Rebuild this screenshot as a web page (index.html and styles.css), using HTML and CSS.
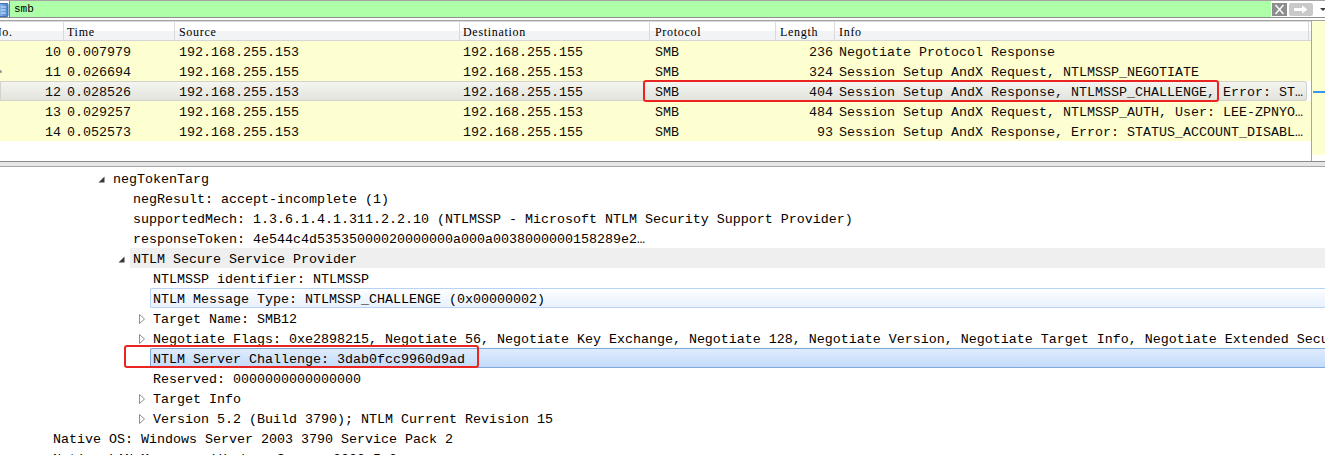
FILE: index.html
```html
<!DOCTYPE html>
<html>
<head>
<meta charset="utf-8">
<title>Wireshark - smb</title>
<link rel="stylesheet" href="styles.css">
</head>
<body>
<div class="app">
  <div class="filterbar">
    <div class="fb-icon">
      <svg width="9" height="16" viewBox="0 0 9 16">
        <defs><linearGradient id="bk" x1="0" y1="0" x2="1" y2="0"><stop offset="0" stop-color="#9cc4ef"/><stop offset="1" stop-color="#4a82cc"/></linearGradient></defs>
        <rect x="-3" y="2.5" width="11" height="13" rx="1" fill="url(#bk)" stroke="#3c6fb4"/>
        <path d="M1 6H6M1 9H6M1 12H6" stroke="#d8e8fa" stroke-width="1"/>
      </svg>
    </div>
    <div class="fb-input">smb</div>
    <div class="fb-clear">
      <svg width="15" height="13" viewBox="0 0 15 13"><rect width="15" height="13" fill="#8d8d8d"/><path d="M3.5 2L11.5 11M11.5 2L3.5 11" stroke="#fff" stroke-width="1.4"/></svg>
    </div>
    <div class="fb-apply">
      <svg width="24" height="13" viewBox="0 0 24 13"><rect width="24" height="13" rx="2" fill="#c9c9c9"/><path d="M5 5H13V2.5L18.5 6.5L13 10.5V8H5Z" fill="#fff"/></svg>
    </div>
    <div class="fb-drop">
      <svg width="5" height="16" viewBox="0 0 5 16"><path d="M0 7H6L3 10Z" fill="#3a3a3a"/></svg>
    </div>
  </div>
  <div class="gap"></div>
  <div class="plist">
    <div class="plist-main">
      <div class="phead">
        <div class="h h-no"><span class="noh">No.</span></div>
        <div class="h h-time">Time</div>
        <div class="h h-src">Source</div>
        <div class="h h-dst">Destination</div>
        <div class="h h-proto">Protocol</div>
        <div class="h h-len">Length</div>
        <div class="h h-info">Info</div>
      </div>
      <div class="prow">
        <div class="c c-no">10</div><div class="c c-time">0.007979</div><div class="c c-src">192.168.255.153</div><div class="c c-dst">192.168.255.155</div><div class="c c-proto">SMB</div><div class="c c-len">236</div><div class="c c-info">Negotiate Protocol Response</div>
      </div>
      <div class="prow">
        <div class="c c-no"><span class="dot"></span>11</div><div class="c c-time">0.026694</div><div class="c c-src">192.168.255.155</div><div class="c c-dst">192.168.255.153</div><div class="c c-proto">SMB</div><div class="c c-len">324</div><div class="c c-info">Session Setup AndX Request, NTLMSSP_NEGOTIATE</div>
      </div>
      <div class="prow sel">
        <div class="c c-no">12</div><div class="c c-time">0.028526</div><div class="c c-src">192.168.255.153</div><div class="c c-dst">192.168.255.155</div><div class="c c-proto">SMB</div><div class="c c-len">404</div><div class="c c-info">Session Setup AndX Response, NTLMSSP_CHALLENGE, Error: ST…</div>
      </div>
      <div class="prow">
        <div class="c c-no">13</div><div class="c c-time">0.029257</div><div class="c c-src">192.168.255.155</div><div class="c c-dst">192.168.255.153</div><div class="c c-proto">SMB</div><div class="c c-len">484</div><div class="c c-info">Session Setup AndX Request, NTLMSSP_AUTH, User: LEE-ZPNYO…</div>
      </div>
      <div class="prow">
        <div class="c c-no">14</div><div class="c c-time">0.052573</div><div class="c c-src">192.168.255.153</div><div class="c c-dst">192.168.255.155</div><div class="c c-proto">SMB</div><div class="c c-len">93</div><div class="c c-info">Session Setup AndX Response, Error: STATUS_ACCOUNT_DISABL…</div>
      </div>
    </div>
    <div class="minimap"><div class="mm-mark"></div></div>
  </div>
  <div class="splitter"></div>
  <div class="details">
    <div class="tr i3"><span class="tw"><svg width="12" height="20" viewBox="0 0 12 20"><path d="M6.5 8.5V14.5H0.5Z" fill="#3a3a3a"/></svg></span><span class="lab">negTokenTarg</span></div>
    <div class="tr i4"><span class="tw"></span><span class="lab">negResult: accept-incomplete (1)</span></div>
    <div class="tr i4"><span class="tw"></span><span class="lab">supportedMech: 1.3.6.1.4.1.311.2.2.10 (NTLMSSP - Microsoft NTLM Security Support Provider)</span></div>
    <div class="tr i4"><span class="tw"></span><span class="lab">responseToken: 4e544c4d53535000020000000a000a0038000000158289e2…</span></div>
    <div class="tr i4"><span class="tw"><svg width="12" height="20" viewBox="0 0 12 20"><path d="M6.5 8.5V14.5H0.5Z" fill="#3a3a3a"/></svg></span><span class="lab hov">NTLM Secure Service Provider</span></div>
    <div class="tr i5"><span class="tw"></span><span class="lab">NTLMSSP identifier: NTLMSSP</span></div>
    <div class="tr i5"><span class="tw"></span><span class="lab selb">NTLM Message Type: NTLMSSP_CHALLENGE (0x00000002)</span></div>
    <div class="tr i5"><span class="tw"><svg width="12" height="20" viewBox="0 0 12 20"><path d="M1.5 6.5L6.5 11L1.5 15.5Z" fill="#fff" stroke="#8f8f8f"/></svg></span><span class="lab">Target Name: SMB12</span></div>
    <div class="tr i5"><span class="tw"><svg width="12" height="20" viewBox="0 0 12 20"><path d="M1.5 6.5L6.5 11L1.5 15.5Z" fill="#fff" stroke="#8f8f8f"/></svg></span><span class="lab">Negotiate Flags: 0xe2898215, Negotiate 56, Negotiate Key Exchange, Negotiate 128, Negotiate Version, Negotiate Target Info, Negotiate Extended Security, Negotiate NTLM key</span></div>
    <div class="tr i5"><span class="tw"></span><span class="lab sel">NTLM Server Challenge: 3dab0fcc9960d9ad</span></div>
    <div class="tr i5"><span class="tw"></span><span class="lab">Reserved: 0000000000000000</span></div>
    <div class="tr i5"><span class="tw"><svg width="12" height="20" viewBox="0 0 12 20"><path d="M1.5 6.5L6.5 11L1.5 15.5Z" fill="#fff" stroke="#8f8f8f"/></svg></span><span class="lab">Target Info</span></div>
    <div class="tr i5"><span class="tw"><svg width="12" height="20" viewBox="0 0 12 20"><path d="M1.5 6.5L6.5 11L1.5 15.5Z" fill="#fff" stroke="#8f8f8f"/></svg></span><span class="lab">Version 5.2 (Build 3790); NTLM Current Revision 15</span></div>
    <div class="tr i0"><span class="tw"></span><span class="lab">Native OS: Windows Server 2003 3790 Service Pack 2</span></div>
    <div class="tr i0"><span class="tw"></span><span class="lab">Native LAN Manager: Windows Server 2003 5.2</span></div>
  </div>
  <div class="redbox rb-packet"></div>
  <div class="redbox rb-challenge"></div>
</div>
</body>
</html>
```
FILE: styles.css
```css
html, body {
  margin: 0;
  padding: 0;
  background: #fff;
}
body {
  width: 1325px;
  height: 455px;
  overflow: hidden;
  font-family: "Liberation Mono", "DejaVu Sans Mono", monospace;
  color: #000;
}
.app {
  position: relative;
  width: 1325px;
  height: 455px;
  overflow: hidden;
}

/* filter bar */
.filterbar {
  display: flex;
  height: 16px;
  border-top: 1px solid #a3a3a3;
  border-bottom: 1px solid #8e8e8e;
}
.fb-icon { width: 9px; flex: none; display: flex; }
.fb-input {
  flex: 1;
  background: #afffa8;
  border-left: 1px solid #7c7c7c;
  padding-left: 4px;
  font-family: "Liberation Mono", monospace;
  font-size: 11px;
  line-height: 17px;
  color: #000;
}
.fb-clear { width: 15px; margin-left: 1px; padding-top: 2px; flex: none; display: flex; align-items: flex-start; }
.fb-apply { width: 24px; margin-left: 2px; padding-top: 2px; flex: none; display: flex; align-items: flex-start; }
.fb-drop { width: 5px; margin-left: 7px; flex: none; display: flex; }
.gap { height: 2px; }

/* packet list */
.plist {
  display: flex;
  height: 140px;
  border-top: 1px solid #a3a3a3;
}
.plist-main {
  width: 1311px;
  border-top: 1px solid #dcdcdc;
  flex: none;
}
.phead, .prow {
  display: grid;
  grid-template-columns: 64px 111px 285px 190px 126px 59px 474px;
}
.phead {
  height: 18px;
  border-bottom: 1px solid #d5d5d5;
  background: linear-gradient(#ffffff 0 48%, #f2f3f5 48%);
}
.h {
  border-right: 1px solid #dadada;
  font-family: "Liberation Serif", serif;
  font-size: 12px;
  letter-spacing: 0.7px;
  line-height: 20px;
  height: 18px;
  color: #000;
  white-space: nowrap;
  overflow: hidden;
}
.h-no .noh { margin-left: -7px; }
.h-time { padding-left: 3px; }
.h-src { padding-left: 4px; }
.h-dst { padding-left: 3px; }
.h-proto { padding-left: 5px; }
.h-len { padding-left: 4px; }
.h-info { padding-left: 4px; }

.prow {
  height: 20px;
  grid-template-rows: 20px;
  background: #feffd0;
  font-size: 13.333px;
  color: #0c0c0c;
  white-space: nowrap;
}
.prow.sel {
  background: linear-gradient(#f5f5f1, #e3e3dd);
  box-shadow: inset 0 0 0 1px #d3d3cc;
  border-radius: 0 3px 3px 0;
  width: 1307px;
}
.c { overflow: hidden; line-height: 24px; height: 20px; }
.c-no { display: flex; justify-content: flex-end; align-items: flex-start; padding-right: 3px; }
.dot {
  width: 3px; height: 3px;
  border-radius: 50%;
  background: #9a9a9a;
  margin-left: -1px;
  margin-right: auto;
  margin-top: 9px;
}
.c-time { padding-left: 3px; }
.c-src { padding-left: 4px; }
.c-dst { padding-left: 3px; }
.c-proto { padding-left: 5px; }
.c-len { text-align: right; padding-right: 2px; }
.c-info { padding-left: 4px; }

.minimap {
  flex: 1;
  border-left: 1px solid #a6a6a6;
  background: linear-gradient(#feffd0 0 134px, #fff 134px);
  padding-top: 70px;
}
.mm-mark {
  height: 2px;
  margin-left: 1px;
  background: #3b93f2;
}

.splitter {
  height: 4px;
  background: #e6e6e6;
  border-top: 1px solid #8a8a8a;
  border-bottom: 1px solid #a8a8a8;
}

/* details tree */
.details {
  padding-top: 1px;
  font-size: 13.333px;
  color: #000;
}
.tr {
  display: flex;
  height: 20px;
  white-space: nowrap;
}
.i0 { padding-left: 38px; }
.i3 { padding-left: 98px; }
.i4 { padding-left: 118px; }
.i5 { padding-left: 138px; }
.tw { width: 12px; flex: none; display: flex; }
.lab { flex: 1; padding-left: 3px; line-height: 23px; height: 20px; }
.lab.hov { background: #efefef; }
.lab.selb {
  background: linear-gradient(#fdfeff, #e8f1fd);
  border: 1px solid #b7d3f5;
  border-right: none;
  border-radius: 2px 0 0 2px;
  padding-left: 2px;
  height: 18px;
  line-height: 21px;
}
.lab.sel {
  background: linear-gradient(#dfecfd, #c3dbf9);
  border: 1px solid #80a9dc;
  border-right: none;
  border-radius: 2px 0 0 2px;
  padding-left: 2px;
  height: 18px;
  line-height: 21px;
}

/* annotation boxes */
.redbox {
  position: absolute;
  border: 2px solid #ea2420;
  border-radius: 3px;
  box-sizing: border-box;
}
.rb-packet { left: 643px; top: 80px; width: 576px; height: 22px; }
.rb-challenge { left: 124px; top: 345px; width: 355px; height: 23px; }
```
